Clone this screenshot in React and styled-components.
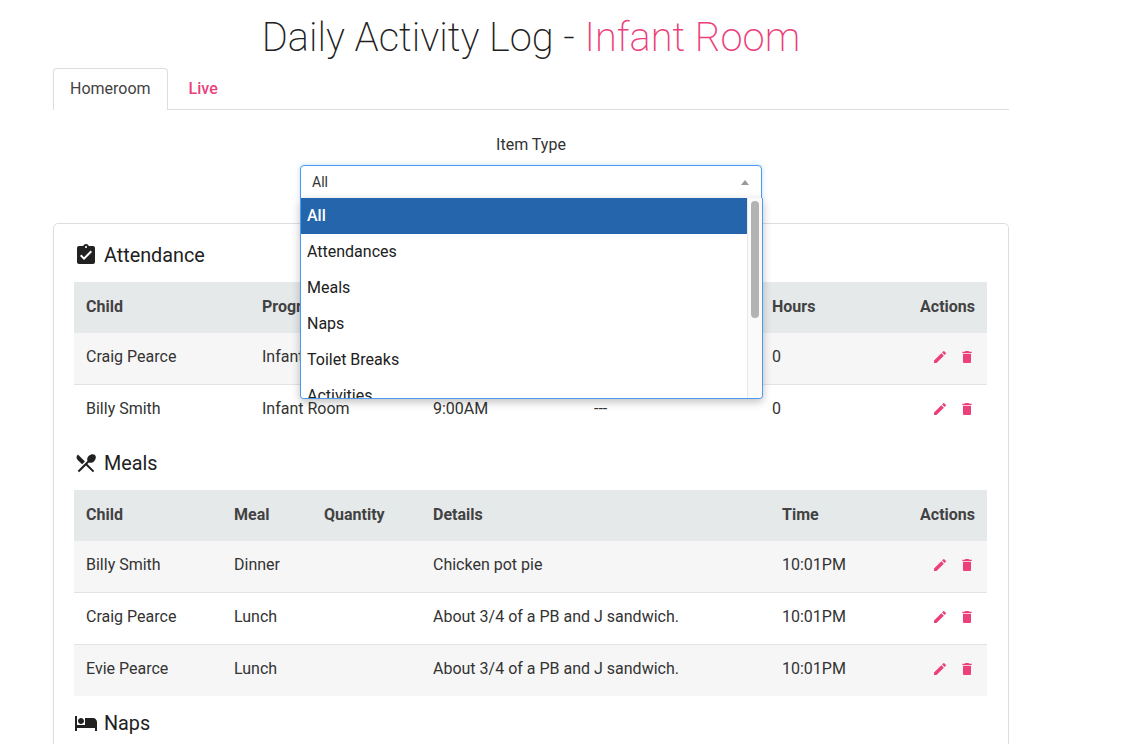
import React from "react";
import styled, { createGlobalStyle } from "styled-components";
import { MdAssignmentTurnedIn, MdLocalDining, MdHotel, MdEdit, MdDelete } from "react-icons/md";

const PINK = "#ec407a";

const Global = createGlobalStyle`
  html, body { margin: 0; padding: 0; background: #fff; height: 744px; overflow: hidden; }
  body { font-family: Roboto, "Liberation Sans", sans-serif; color: #333; }
  * { box-sizing: border-box; }
`;

const Page = styled.div`
  width: 956px;
  margin-left: 53px;
  height: 744px;
  overflow: hidden;
`;

const Title = styled.h1`
  margin: 0;
  height: 68px;
  padding-top: 14px;
  text-align: center;
  font-size: 39.8px;
  line-height: 48px;
  font-weight: 200;
  color: #212121;
`;

const Accent = styled.span`
  color: ${PINK};
`;

const Tabs = styled.div`
  display: flex;
  height: 42px;
  border-bottom: 1px solid #ddd;
`;

const Tab = styled.div`
  height: 42px;
  padding: 0 ${(p) => (p.$active ? "16px" : "20px")};
  line-height: 40px;
  font-size: 16px;
  color: ${(p) => (p.$active ? "#424242" : PINK)};
  font-weight: ${(p) => (p.$active ? 400 : 500)};
  background: ${(p) => (p.$active ? "#fff" : "transparent")};
  border: ${(p) => (p.$active ? "1px solid #ddd" : "1px solid transparent")};
  border-bottom: ${(p) => (p.$active ? "none" : "1px solid transparent")};
  border-radius: 4px 4px 0 0;
`;

const Filter = styled.div`
  display: flex;
  flex-direction: column;
  align-items: center;
  padding-top: 25px;
  height: 113px;
`;

const FilterLabel = styled.label`
  font-size: 16px;
  line-height: 20px;
  color: #333;
  margin-bottom: 10px;
`;

const SelectBox = styled.div`
  position: relative;
  width: 462px;
  height: 34px;
`;

const Control = styled.div`
  display: flex;
  align-items: center;
  justify-content: space-between;
  height: 34px;
  padding: 0 12px 0 11px;
  background: #fff;
  border: 1px solid #4a9af0;
  border-radius: 4px 4px 0 0;
  box-shadow: 0 0 5px rgba(74, 154, 240, 0.35);
  font-size: 14px;
  color: #333;
`;

const Caret = styled.span`
  width: 0;
  height: 0;
  border-left: 4px solid transparent;
  border-right: 4px solid transparent;
  border-bottom: 5px solid #999;
`;

const Menu = styled.div`
  position: absolute;
  top: 33px;
  left: 0;
  width: 463px;
  height: 201px;
  overflow: hidden;
  z-index: 5;
  background: #fff;
  border: 1px solid #4a9af0;
  border-top: none;
  border-radius: 0 0 4px 4px;
  box-shadow: 0 3px 8px rgba(0, 0, 0, 0.25);
`;

const Option = styled.div`
  height: 36px;
  width: 446px;
  padding-left: 6px;
  line-height: 35px;
  font-size: 16px;
  color: ${(p) => (p.$selected ? "#fff" : "#212121")};
  background: ${(p) => (p.$selected ? "#2565ab" : "#fff")};
  font-weight: ${(p) => (p.$selected ? 500 : 400)};
`;

const ScrollTrack = styled.div`
  position: absolute;
  top: 0;
  right: 0;
  bottom: 0;
  width: 15px;
  background: #fafafa;
  border-left: 1px solid #e8e8e8;
`;

const ScrollThumb = styled.div`
  margin: 3px 0 0 3px;
  width: 8px;
  height: 117px;
  background: #b3b3b3;
  border-radius: 4px;
`;

const Card = styled.div`
  background: #fff;
  border: 1px solid #ddd;
  border-radius: 5px;
  padding: 14px 21px 0 20px;
`;

const SectionTitle = styled.h3`
  display: flex;
  align-items: center;
  gap: 6px;
  margin: 0 0 10px;
  height: 34px;
  font-size: 19.8px;
  font-weight: 400;
  color: #212121;
  & svg { width: 24px; height: 24px; color: #212121; flex: none; }
`;

const Table = styled.table`
  width: 913px;
  table-layout: fixed;
  border-collapse: separate;
  border-spacing: 0;
  font-size: 16px;
  margin-bottom: 10px;
`;

const HeadCell = styled.th`
  height: 51px;
  padding: 0 12px 2px;
  background: #e6e9ea;
  color: #424242;
  font-weight: 700;
  text-align: ${(p) => (p.$right ? "right" : "left")};
`;

const Cell = styled.td`
  height: 52px;
  padding: ${(p) => (p.$right ? "0 12px" : "0 12px 5px")};
  border-bottom: 1px solid #e3e3e3;
  color: #333;
  white-space: nowrap;
  overflow: hidden;
  text-align: ${(p) => (p.$right ? "right" : "left")};
`;

const Row = styled.tr`
  background: ${(p) => (p.$odd ? "#f6f6f6" : "#fff")};
  &:last-child td { height: 51px; border-bottom: none; }
`;

const Actions = styled.span`
  display: inline-flex;
  align-items: center;
  gap: 11px;
  color: ${PINK};
  & svg { width: 16px; height: 16px; display: block; }
`;

const options = ["All", "Attendances", "Meals", "Naps", "Toilet Breaks", "Activities"];

const attendanceCols = [176, 171, 161, 178, 140, 87];
const attendanceHead = ["Child", "Program", "In", "Out", "Hours"];
const attendanceRows = [
  ["Craig Pearce", "Infant Room", "9:00AM", "---", "0"],
  ["Billy Smith", "Infant Room", "9:00AM", "---", "0"],
];

const mealCols = [148, 90, 109, 349, 110, 107];
const mealHead = ["Child", "Meal", "Quantity", "Details", "Time"];
const mealRows = [
  ["Billy Smith", "Dinner", "", "Chicken pot pie", "10:01PM"],
  ["Craig Pearce", "Lunch", "", "About 3/4 of a PB and J sandwich.", "10:01PM"],
  ["Evie Pearce", "Lunch", "", "About 3/4 of a PB and J sandwich.", "10:01PM"],
];

function DataTable({ cols, head, rows }) {
  return (
    <Table>
      <colgroup>
        {cols.map((w, i) => (
          <col key={i} width={w} />
        ))}
      </colgroup>
      <thead>
        <tr>
          {head.map((h) => (
            <HeadCell key={h}>{h}</HeadCell>
          ))}
          <HeadCell $right>Actions</HeadCell>
        </tr>
      </thead>
      <tbody>
        {rows.map((r, i) => (
          <Row key={i} $odd={i % 2 === 0}>
            {r.map((c, j) => (
              <Cell key={j}>{c}</Cell>
            ))}
            <Cell $right>
              <Actions>
                <MdEdit />
                <MdDelete />
              </Actions>
            </Cell>
          </Row>
        ))}
      </tbody>
    </Table>
  );
}

export default function App() {
  return (
    <Page>
      <Global />
      <Title>
        Daily Activity Log - <Accent>Infant Room</Accent>
      </Title>
      <Tabs>
        <Tab $active>Homeroom</Tab>
        <Tab>Live</Tab>
      </Tabs>
      <Filter>
        <FilterLabel>Item Type</FilterLabel>
        <SelectBox>
          <Control>
            All
            <Caret />
          </Control>
          <Menu>
            {options.map((o, i) => (
              <Option key={o} $selected={i === 0}>
                {o}
              </Option>
            ))}
            <ScrollTrack>
              <ScrollThumb />
            </ScrollTrack>
          </Menu>
        </SelectBox>
      </Filter>
      <Card>
        <SectionTitle>
          <MdAssignmentTurnedIn />
          Attendance
        </SectionTitle>
        <DataTable cols={attendanceCols} head={attendanceHead} rows={attendanceRows} />
        <SectionTitle>
          <MdLocalDining />
          Meals
        </SectionTitle>
        <DataTable cols={mealCols} head={mealHead} rows={mealRows} />
        <SectionTitle>
          <MdHotel />
          Naps
        </SectionTitle>
      </Card>
    </Page>
  );
}
